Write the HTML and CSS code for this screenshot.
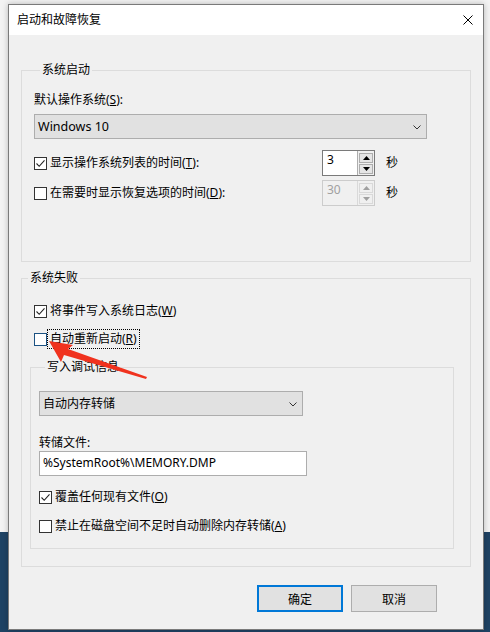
FILE: index.html
```html
<!DOCTYPE html>
<html lang="zh-CN">
<head>
    <meta charset="UTF-8">
    <title>启动和故障恢复</title>
    <link rel="stylesheet" href="styles.css">
</head>
<body>
    <div class="dialog">
        <div class="titlebar">
            <span class="title">启动和故障恢复</span>
            <svg class="close" width="10" height="10" viewBox="0 0 10 10">
                <path d="M0.5 0.5 L9.5 9.5 M9.5 0.5 L0.5 9.5" stroke="#000" stroke-width="1" fill="none"/>
            </svg>
        </div>

        <div class="content">
            <fieldset class="group group-startup">
                <legend>系统启动</legend>
                <div class="field-label label-os">默认操作系统(<u>S</u>):</div>
                <div class="select select-os">
                    <span>Windows 10</span>
                    <svg class="chevron" width="8" height="5" viewBox="0 0 8 5"><path d="M0.5 0.5 L4 4 L7.5 0.5" stroke="#333" fill="none"/></svg>
                </div>

                <div class="time-row row-first">
                    <div class="check">
                        <span class="box">
                            <svg width="11" height="11" viewBox="0 0 11 11"><path d="M1.5 5.5 L4.2 8.3 L9.5 2.3" stroke="#222" stroke-width="1.1" fill="none"/></svg>
                        </span>
                        <span>显示操作系统列表的时间(<u>T</u>):</span>
                    </div>
                    <div class="spin">
                        <span class="spin-value">3</span>
                        <span class="spin-btns">
                            <span class="spin-btn"><svg width="7" height="4" viewBox="0 0 7 4"><path d="M0 4 L3.5 0 L7 4 Z" fill="#000"/></svg></span>
                            <span class="spin-btn"><svg width="7" height="4" viewBox="0 0 7 4"><path d="M0 0 L3.5 4 L7 0 Z" fill="#000"/></svg></span>
                        </span>
                    </div>
                    <span class="unit">秒</span>
                </div>

                <div class="time-row row-second">
                    <div class="check">
                        <span class="box"></span>
                        <span>在需要时显示恢复选项的时间(<u>D</u>):</span>
                    </div>
                    <div class="spin spin-disabled">
                        <span class="spin-value">30</span>
                        <span class="spin-btns">
                            <span class="spin-btn"><svg width="7" height="4" viewBox="0 0 7 4"><path d="M0 4 L3.5 0 L7 4 Z" fill="#a0a0a0"/></svg></span>
                            <span class="spin-btn"><svg width="7" height="4" viewBox="0 0 7 4"><path d="M0 0 L3.5 4 L7 0 Z" fill="#a0a0a0"/></svg></span>
                        </span>
                    </div>
                    <span class="unit">秒</span>
                </div>
            </fieldset>

            <fieldset class="group group-failure">
                <legend>系统失败</legend>
                <div class="check check-log">
                    <span class="box">
                        <svg width="11" height="11" viewBox="0 0 11 11"><path d="M1.5 5.5 L4.2 8.3 L9.5 2.3" stroke="#222" stroke-width="1.1" fill="none"/></svg>
                    </span>
                    <span>将事件写入系统日志(<u>W</u>)</span>
                </div>
                <div class="check check-restart">
                    <span class="box box-focus"></span>
                    <span class="focus-text">自动重新启动(<u>R</u>)</span>
                </div>

                <fieldset class="group group-debug">
                    <legend>写入调试信息</legend>
                    <div class="select select-dump">
                        <span>自动内存转储</span>
                        <svg class="chevron" width="8" height="5" viewBox="0 0 8 5"><path d="M0.5 0.5 L4 4 L7.5 0.5" stroke="#333" fill="none"/></svg>
                    </div>
                    <div class="field-label label-file">转储文件:</div>
                    <div class="textbox">%SystemRoot%\MEMORY.DMP</div>
                    <div class="check check-overwrite">
                        <span class="box">
                            <svg width="11" height="11" viewBox="0 0 11 11"><path d="M1.5 5.5 L4.2 8.3 L9.5 2.3" stroke="#222" stroke-width="1.1" fill="none"/></svg>
                        </span>
                        <span>覆盖任何现有文件(<u>O</u>)</span>
                    </div>
                    <div class="check check-disable">
                        <span class="box"></span>
                        <span>禁止在磁盘空间不足时自动删除内存转储(<u>A</u>)</span>
                    </div>
                </fieldset>
            </fieldset>

            <div class="buttons">
                <button class="btn btn-default">确定</button>
                <button class="btn">取消</button>
            </div>
        </div>
    </div>

    <!-- red annotation arrow over the window -->
    <svg class="annotation" width="490" height="632" viewBox="0 0 490 632">
        <polygon points="49,341 73,345 68,349 147,377 146,379 64,355 61,362" fill="#f0321e"/>
    </svg>
</body>
</html>
```

FILE: styles.css
```css
body {
    margin: 0;
    width: 490px;
    height: 632px;
    overflow: hidden;
    font-family: "Noto Sans", "Noto Sans CJK SC", sans-serif;
    font-size: 12px;
    line-height: 16px;
    color: #000;
    background: linear-gradient(to bottom, #f3f3f3 532px, #1f4364 532px);
    position: relative;
}
.dialog {
    margin: 4px 0 0 8px;
    width: 476px;
    box-sizing: border-box;
    border: 1px solid #7a7a7a;
    background-color: #f0f0f0;
    box-shadow: 0 0 6px rgba(0,0,0,0.25);
}
.titlebar {
    height: 30px;
    background-color: #fff;
    display: flex;
    align-items: center;
    justify-content: space-between;
    padding: 0 10px 0 8px;
}
.title {
    margin-top: -1px;
}
.content {
    padding: 27px 12px 17px 12px;
}
.group {
    margin: 0;
    padding: 0;
    min-width: 0;
    border: 1px solid #dcdcdc;
}
.group legend {
    padding: 0 2px;
    margin-left: 6px;
    line-height: 16px;
}
.group-startup {
    padding: 14px 0 55px 12px;
}
.group-failure {
    margin-top: 8px;
    padding: 0 16px 17px 0;
}
.group-debug {
    margin: 10px 0 0 8px;
    padding: 16px 0 12px 8px;
}
.field-label {
    height: 16px;
}
.select {
    height: 25px;
    box-sizing: border-box;
    border: 1px solid #adadad;
    background-color: #e1e1e1;
    display: flex;
    align-items: center;
    justify-content: space-between;
    padding: 0 5px 0 3px;
}
.select-os {
    width: 393px;
    margin-top: 6px;
    font-size: 12.5px;
}
.select-dump {
    width: 264px;
}
.chevron {
    margin-top: 1px;
}
.time-row {
    display: flex;
    align-items: center;
    height: 26px;
}
.row-first {
    margin-top: 11px;
}
.row-second {
    margin-top: 4px;
}
.time-row .check {
    width: 288px;
}
.check {
    display: flex;
    align-items: center;
    height: 20px;
}
.box {
    width: 13px;
    height: 13px;
    box-sizing: border-box;
    border: 1px solid #333;
    background-color: #fff;
    margin-right: 3px;
    display: flex;
    align-items: center;
    justify-content: center;
    flex-shrink: 0;
}
.box-focus {
    border-color: #1b5283;
}
.focus-text {
    outline: 1px dotted #000;
    outline-offset: 1px;
    padding: 0 1px;
    margin-left: -1px;
}
.spin {
    width: 53px;
    height: 26px;
    box-sizing: border-box;
    border: 1px solid #7a7a7a;
    background-color: #fff;
    display: flex;
}
.spin-value {
    flex: 1;
    padding: 1px 0 0 4px;
}
.spin-btns {
    width: 16px;
    display: flex;
    flex-direction: column;
    padding: 1px 0 1px 0;
    background-color: #f0f0f0;
    border-left: 1px solid #adadad;
}
.spin-btn {
    flex: 1;
    margin: 1px 1px 0 1px;
    background-color: #e5e5e5;
    border: 1px solid #adadad;
    display: flex;
    align-items: center;
    justify-content: center;
}
.spin-disabled {
    border-color: #cccccc;
    background-color: #f0f0f0;
    color: #a0a0a0;
}
.spin-disabled .spin-btns {
    border-left-color: #d9d9d9;
}
.spin-disabled .spin-btn {
    background-color: #f0f0f0;
    border-color: #d9d9d9;
}
.unit {
    margin-left: 11px;
}
.check-log {
    margin: 15px 0 0 12px;
}
.check-restart {
    margin: 8px 0 0 12px;
}
.label-file {
    margin-top: 19px;
}
.textbox {
    width: 268px;
    height: 25px;
    box-sizing: border-box;
    border: 1px solid #adadad;
    background-color: #fff;
    padding: 3px 0 0 3px;
}
.check-overwrite {
    margin-top: 11px;
}
.check-disable {
    margin-top: 9px;
}
.buttons {
    display: flex;
    justify-content: flex-end;
    gap: 8px;
    margin-top: 18px;
    padding-right: 34px;
}
.btn {
    width: 86px;
    height: 27px;
    box-sizing: border-box;
    border: 1px solid #adadad;
    background-color: #e1e1e1;
    font-family: "Noto Sans", "Noto Sans CJK SC", sans-serif;
    font-size: 12px;
    color: #000;
    padding: 0;
}
.btn-default {
    border: 2px solid #0078d7;
}
.annotation {
    position: absolute;
    left: 0;
    top: 0;
    pointer-events: none;
}
```
